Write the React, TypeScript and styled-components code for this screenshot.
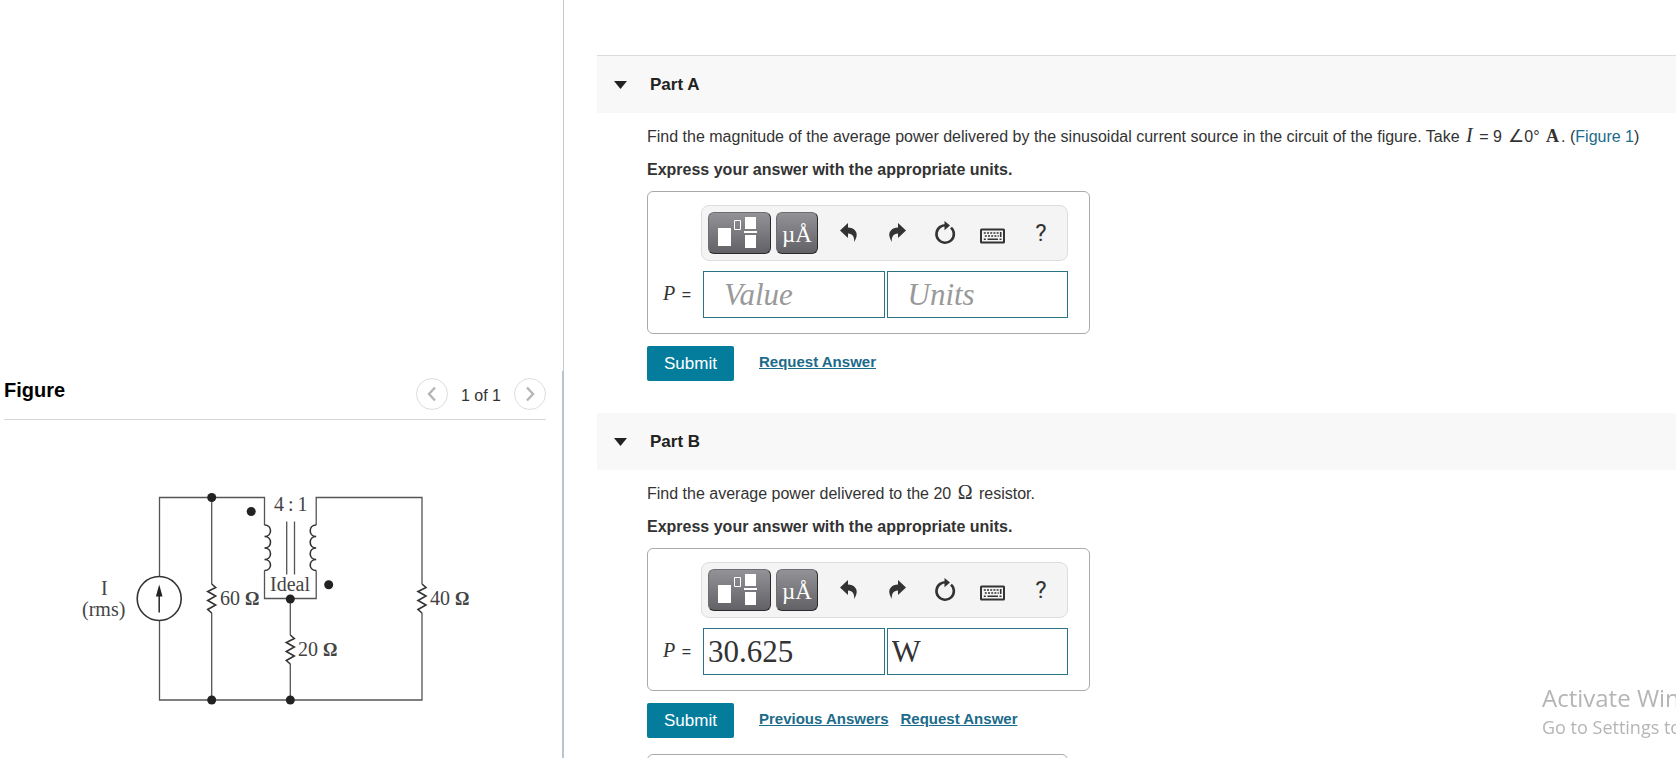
import React, { useState } from "react";
import styled, { createGlobalStyle } from "styled-components";

const sans = '"Liberation Sans", Arial, sans-serif';
const serif = '"Liberation Serif", "Times New Roman", serif';

const GlobalStyle = createGlobalStyle`
  * { box-sizing: border-box; }
  body { margin: 0; background: #fff; color: #333; font: 16px/20px ${sans}; overflow: hidden; }
  h2, p { margin: 0; }
  button, input { font-family: inherit; margin: 0; }
`;

const Page = styled.div`
  display: flex;
  height: 100vh;
  overflow: hidden;
`;

const FigurePane = styled.aside`
  display: flex;
  flex-direction: column;
  width: 564px;
  flex: none;
`;

const PaneSpacer = styled.div`
  height: 371px;
  flex: none;
  border-right: 1px solid #c6c9ca;
`;

const FigureArea = styled.section`
  flex: 1;
  padding: 0 16px 0 4px;
  border-right: 2px solid #b7c5cb;
`;

const FigureHeader = styled.header`
  display: flex;
  justify-content: space-between;
  height: 49px;
  border-bottom: 1px solid #d5d8d9;
`;

const FigureTitle = styled.h2`
  padding-top: 9px;
  color: #000;
  font-size: 20px;
  line-height: 20px;
`;

const Pager = styled.nav`
  display: flex;
  align-items: center;
  gap: 13px;
  height: 46px;
`;

const PagerLabel = styled.span`
  padding-top: 4px;
  line-height: 20px;
`;

const PagerButton = styled.button`
  display: grid;
  place-items: center;
  width: 32px;
  height: 32px;
  padding: 0;
  border: 1px solid #dedede;
  border-radius: 50%;
  background: #fff;
`;

const Circuit = styled.svg`
  display: block;
  width: 100%;
  max-width: 542px;
  font: 20px ${serif};
`;

const CircuitOmega = styled.tspan`
  font-size: 18px;
  font-weight: bold;
`;

const Parts = styled.main`
  flex: 1;
  min-width: 0;
  padding: 55px 0 0 33px;
`;

const PartHeader = styled.button<{ $first?: boolean }>`
  display: flex;
  align-items: center;
  gap: 23px;
  width: 100%;
  height: ${(p) => (p.$first ? 58 : 57)}px;
  padding: 0 0 0 17px;
  border: 0;
  border-top: ${(p) => (p.$first ? "1px solid #dadddd" : "0")};
  background: #f8f8f8;
  color: #222;
  font-size: 17px;
  font-weight: bold;
  line-height: 20px;
`;

const PartBody = styled.div`
  padding: 14px 0 32px 50px;
`;

const Prompt = styled.p`
  line-height: 20px;
  white-space: nowrap;
`;

const Instruction = styled.p`
  padding: 13px 0 11px;
  font-weight: bold;
  line-height: 20px;
`;

const MathText = styled.span<{ $italic?: boolean; $strong?: boolean }>`
  margin: 0 2px;
  font-family: ${serif};
  font-size: ${(p) => (p.$strong ? 18 : 20)}px;
  font-style: ${(p) => (p.$italic ? "italic" : "normal")};
  font-weight: ${(p) => (p.$strong ? "bold" : "normal")};
  line-height: 16px;
`;

const AngleSign = styled.span`
  margin-left: 2px;
  font-family: "DejaVu Sans", sans-serif;
  font-size: 18px;
  font-weight: 200;
  line-height: 16px;
`;

const FigureLink = styled.a`
  color: #1b6b8a;
  text-decoration: none;
`;

const AnswerBox = styled.form`
  width: 443px;
  padding: 13px 21px 15px 13px;
  border: 1px solid #aaa;
  border-radius: 6px;
`;

const Toolbar = styled.div`
  display: flex;
  align-items: center;
  height: 56px;
  margin-left: 40px;
  padding-left: 6px;
  border: 1px solid #ddd;
  border-radius: 8px;
  background: #f4f4f4;
`;

const PaletteButton = styled.button<{ $wide?: boolean }>`
  display: grid;
  place-items: center;
  flex: none;
  width: ${(p) => (p.$wide ? 63 : 42)}px;
  height: 42px;
  margin-right: 5px;
  padding: ${(p) => (p.$wide ? 0 : 4)}px 0 0;
  border: 1px solid;
  border-color: #6d6d72 #2a2a2c #2a2a2c #6d6d72;
  border-radius: 6px;
  background: linear-gradient(#929297, #626266);
  color: #fff;
  font: 23px/36px ${serif};
`;

const ToolButton = styled.button`
  display: grid;
  place-items: center;
  width: 48px;
  height: 42px;
  padding: 0;
  border: 0;
  background: none;
  color: #333;
  font: 24px/24px Roboto, ${sans};
`;

const Tools = styled.div`
  display: flex;
  margin-left: 2px;
`;

const AnswerRow = styled.div`
  display: flex;
  align-items: center;
  gap: 2px;
  margin-top: 10px;
`;

const Variable = styled.label`
  width: 40px;
  white-space: nowrap;
`;

const AnswerInput = styled.input`
  flex: 1;
  min-width: 0;
  height: 47px;
  padding: 0 4px;
  border: 1px solid #2a7485;
  border-radius: 0;
  background: #fff;
  color: #333;
  font: 31px/36px ${serif};
  &::placeholder {
    padding-left: 16px;
    color: #999;
    font-style: italic;
    opacity: 1;
  }
`;

const Actions = styled.div`
  display: flex;
  align-items: center;
  gap: 12px;
  margin-top: 12px;
`;

const SubmitButton = styled.button`
  width: 87px;
  height: 35px;
  margin-right: 13px;
  padding: 0;
  border: 0;
  border-radius: 2px;
  background: #047d9d;
  color: #fff;
  font-size: 17px;
`;

const ActionLink = styled.a`
  padding-bottom: 4px;
  color: #1b6b8a;
  font-size: 15px;
  font-weight: bold;
  line-height: 20px;
`;

const FeedbackBox = styled.div`
  width: 421px;
  height: 60px;
  margin-top: 16px;
  border: 1px solid #aaa;
  border-radius: 6px;
`;

const Watermark = styled.div`
  position: fixed;
  left: calc(100% - 134px);
  bottom: 19px;
  color: #b5b5b5;
  font-family: "Open Sans", "Noto Sans", sans-serif;
  white-space: nowrap;
  pointer-events: none;
`;

const WatermarkTitle = styled.p`
  font-size: 24px;
  line-height: 34px;
`;

const WatermarkText = styled.p`
  font-size: 18px;
  line-height: 24px;
`;

const Chevron = ({ right }: { right?: boolean }) => (
  <svg width="12" height="16" viewBox="0 0 12 16" fill="none" stroke="#b5b5b5" strokeWidth="2.400">
    <path d={right ? "M3 1.500l6 6.500-6 6.500" : "M9 1.500l-6 6.500 6 6.500"} />
  </svg>
);

const TemplateIcon = () => (
  <svg width="61" height="40" viewBox="0 0 61 40">
    <path fill="#fff" d="M9 15h13v18H9zM36 4h11v12H36zM36 22h11v13H36zM35 18h13v2H35z" />
    <path fill="none" stroke="#fff" d="M25.500 7.500h6v9h-6z" />
  </svg>
);

const ArrowIcon = ({ flip }: { flip?: boolean }) => (
  <svg width="18" height="20" viewBox="0 0 18 20" fill="#333">
    <path
      transform={flip ? "translate(18 0) scale(-1 1)" : undefined}
      d="M0 7.500L8 0v4.500c6 .200 9.500 4 8.600 8.500-.3 2-1.300 4-2.500 6 .6-4.800-1.300-8.300-6.100-8.500V15z"
    />
  </svg>
);

const ResetIcon = () => (
  <svg width="22" height="24" viewBox="0 0 22 24">
    <path
      fill="none"
      stroke="#333"
      strokeWidth="2.600"
      d="M17 6.600A8.700 8.700 0 1 1 6.200 5.900Q8.500 4.300 12 4.300"
    />
    <path fill="#333" d="M10.500 0l5.500 4.500-5.500 4.700z" />
  </svg>
);

const KeyboardIcon = () => (
  <svg width="26" height="22" viewBox="0 -6 26 22" fill="none" stroke="#333">
    <rect x="1" y="1.500" width="23" height="13" rx="0.500" strokeWidth="2" />
    <path strokeWidth="1.500" strokeDasharray="2 1.200" d="M3.800 5h15M4.800 8h14" />
    <path strokeWidth="1.600" d="M3.800 11.300h2M7.500 11.300h10.500M19.500 11.300h2M20.700 4v5" />
  </svg>
);

const Caret = () => (
  <svg width="13" height="8" viewBox="0 0 13 8" fill="#222">
    <path d="M0 0h13L6.500 8z" />
  </svg>
);

const CircuitDiagram = () => (
  <Circuit viewBox="4 420 542 330" role="img" aria-label="Circuit with an ideal transformer">
    <g fill="none" stroke="#555" strokeWidth="1.300">
      <path d="M159.500 576.500V497.500H264.500V525M159.500 620.500V700H422V613" />
      <path d="M211.700 497.500V584M211.700 613V700M422 584V497.500H316.200V525" />
      <path d="M264.500 570.500V598.500H316.200V570.500M290.300 598.500V635M290.300 664V700" />
      <path d="M286.700 521.500V574.500M294.500 521.500V574.500" />
    </g>
    <g fill="none" stroke="#333" strokeWidth="1.600">
      {[
        [211.7, 584],
        [290.3, 635],
        [422, 584],
      ].map(([x, y]) => (
        <path key={x} d={`M${x} ${y}l4 3.500-8 4 8 4.500-8 4.500 8 4.500-8 4.500 4 3.500`} />
      ))}
      <path d="M264.500 525c8 0 8 11.500 0 11.500c8 0 8 11.500 0 11.500c8 0 8 11.500 0 11.500c8 0 8 11 0 11" />
      <path d="M316.200 525c-8 0-8 11.500 0 11.500c-8 0-8 11.500 0 11.500c-8 0-8 11.500 0 11.500c-8 0-8 11 0 11" />
      <circle cx="159.200" cy="598.500" r="22" />
      <path d="M159.200 612.500V592" />
    </g>
    <g fill="#222">
      <path d="M159.200 584.500l3.300 12h-6.600z" />
      {[
        [211.7, 497.5],
        [251.2, 511.5],
        [328.7, 584.8],
        [290.3, 599],
        [211.7, 700],
        [290.3, 700],
      ].map(([x, y]) => (
        <circle key={`${x}-${y}`} cx={x} cy={y} r="4.500" />
      ))}
    </g>
    <g fill="#444">
      <text x="101" y="595">I</text>
      <text x="82" y="616">(rms)</text>
      <text x="220" y="605">60 <CircuitOmega>Ω</CircuitOmega></text>
      <text x="274" y="511">4{"\u2009"}:{"\u2009"}1</text>
      <text x="270" y="591">Ideal</text>
      <text x="298" y="656">20 <CircuitOmega>Ω</CircuitOmega></text>
      <text x="430" y="605">40 <CircuitOmega>Ω</CircuitOmega></text>
    </g>
  </Circuit>
);

type PartProps = {
  id: string;
  first?: boolean;
  value?: string;
  units?: string;
  links: string[];
  children: React.ReactNode;
};

const Part = ({ id, first, value = "", units = "", links, children }: PartProps) => {
  const [answer, setAnswer] = useState(value);
  const [unit, setUnit] = useState(units);
  return (
    <section>
      <PartHeader type="button" $first={first} aria-expanded="true">
        <Caret />
        Part {id}
      </PartHeader>
      <PartBody>
        <Prompt>{children}</Prompt>
        <Instruction>Express your answer with the appropriate units.</Instruction>
        <AnswerBox id={`form-${id}`} onSubmit={(e) => e.preventDefault()}>
          <Toolbar>
            <PaletteButton type="button" $wide aria-label="Templates">
              <TemplateIcon />
            </PaletteButton>
            <PaletteButton type="button">µÅ</PaletteButton>
            <Tools>
              <ToolButton type="button" aria-label="Undo"><ArrowIcon /></ToolButton>
              <ToolButton type="button" aria-label="Redo"><ArrowIcon flip /></ToolButton>
              <ToolButton type="button" aria-label="Reset"><ResetIcon /></ToolButton>
              <ToolButton type="button" aria-label="Keyboard"><KeyboardIcon /></ToolButton>
              <ToolButton type="button">?</ToolButton>
            </Tools>
          </Toolbar>
          <AnswerRow>
            <Variable htmlFor={`value-${id}`}>
              <MathText $italic>P</MathText> =
            </Variable>
            <AnswerInput
              id={`value-${id}`}
              placeholder="Value"
              value={answer}
              onChange={(e) => setAnswer(e.target.value)}
            />
            <AnswerInput
              aria-label="Units"
              placeholder="Units"
              value={unit}
              onChange={(e) => setUnit(e.target.value)}
            />
          </AnswerRow>
        </AnswerBox>
        <Actions>
          <SubmitButton form={`form-${id}`}>Submit</SubmitButton>
          {links.map((link) => (
            <ActionLink key={link} href="#">{link}</ActionLink>
          ))}
        </Actions>
        {value && <FeedbackBox />}
      </PartBody>
    </section>
  );
};

export default function App() {
  return (
    <>
      <GlobalStyle />
      <Page>
        <FigurePane>
          <PaneSpacer />
          <FigureArea>
            <FigureHeader>
              <FigureTitle>Figure</FigureTitle>
              <Pager>
                <PagerButton type="button" aria-label="Previous figure"><Chevron /></PagerButton>
                <PagerLabel>1 of 1</PagerLabel>
                <PagerButton type="button" aria-label="Next figure"><Chevron right /></PagerButton>
              </Pager>
            </FigureHeader>
            <CircuitDiagram />
          </FigureArea>
        </FigurePane>
        <Parts>
          <Part id="A" first links={["Request Answer"]}>
            Find the magnitude of the average power delivered by the sinusoidal current source in
            the circuit of the figure. Take <MathText $italic>I</MathText> = 9{" "}
            <AngleSign>∠</AngleSign>0°{" "}
            <MathText $strong>A</MathText>. (<FigureLink href="#">Figure 1</FigureLink>)
          </Part>
          <Part id="B" value="30.625" units="W" links={["Previous Answers", "Request Answer"]}>
            Find the average power delivered to the 20 <MathText>Ω</MathText> resistor.
          </Part>
        </Parts>
      </Page>
      <Watermark>
        <WatermarkTitle>Activate Windows</WatermarkTitle>
        <WatermarkText>Go to Settings to activate Windows.</WatermarkText>
      </Watermark>
    </>
  );
}
